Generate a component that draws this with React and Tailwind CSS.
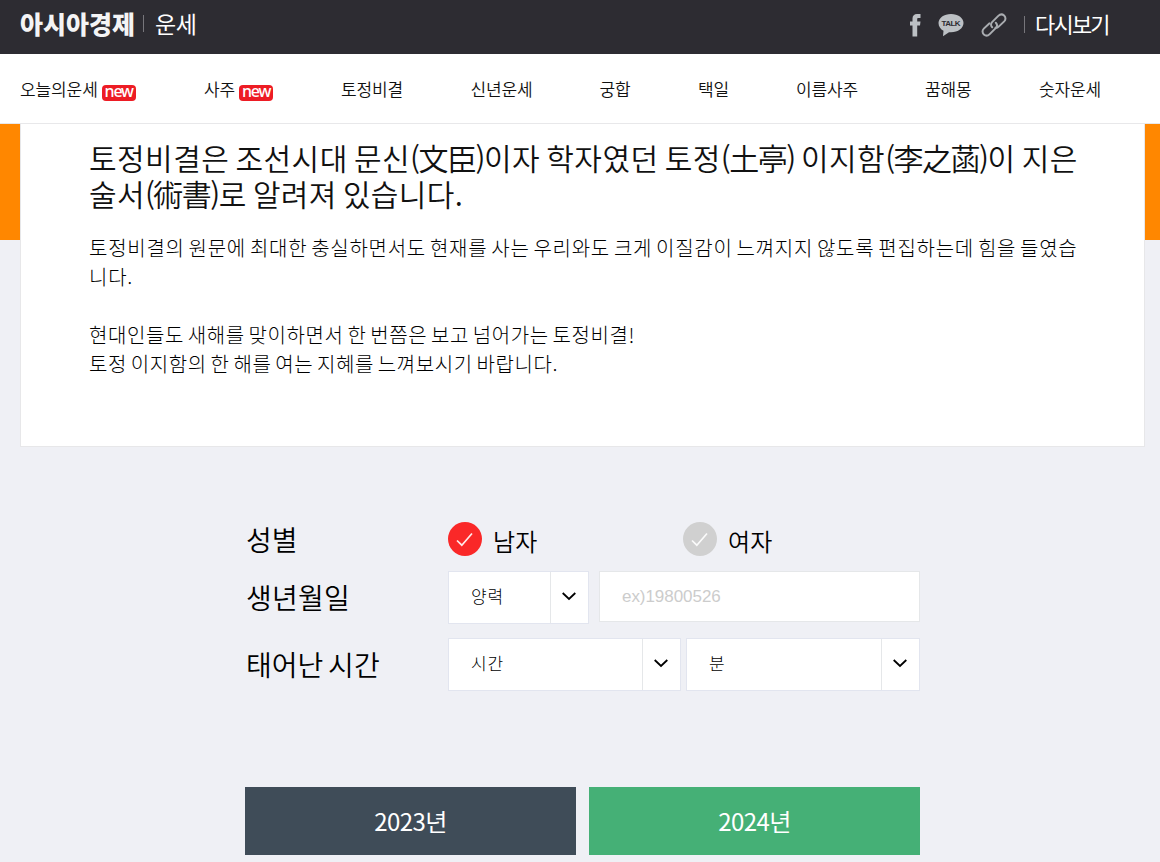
import { useState } from 'react';

const menus = [
  { name: '오늘의운세', isNew: true, width: 'w-[184px]' },
  { name: '사주', isNew: true, width: 'w-[137px]' },
  { name: '토정비결', width: 'w-[129.5px]' },
  { name: '신년운세', width: 'w-[129px]' },
  { name: '궁합', width: 'w-[98.5px]' },
  { name: '택일', width: 'w-[98px]' },
  { name: '이름사주', width: 'w-[129px]' },
  { name: '꿈해몽', width: 'w-[114px]' },
  { name: '숫자운세', width: 'w-[80px]' },
];

function FacebookIcon() {
  return (
    <svg width="11" height="24" viewBox="0 0 11 24" fill="#bcc0c4">
      <path d="M2.500 23.500V12.500H0V8.500h2.500V5.500C2.500 2.500 4.300 1 7 1h3.500v4H8.500C7.500 5 7.200 5.400 7.200 6.200V8.500h3.300l-.5 4H7.200v11z" />
    </svg>
  );
}

function TalkIcon() {
  return (
    <svg width="26" height="24" viewBox="0 0 26 24">
      <path d="M13 1C6 1 .5 4.900.5 10c0 3.400 2 6.200 5 7.800L5 23.200l6-4c.7.1 1.300.1 2 .1 7 0 12.500-4.200 12.500-9.300S20 1 13 1z" fill="#bcc0c4" />
      <text x="13" y="13.200" textAnchor="middle" textLength="19" fontFamily="Liberation Sans, sans-serif" fontWeight="700" fontSize="8" fill="#2d2c32">
        TALK
      </text>
    </svg>
  );
}

function LinkIcon() {
  return (
    <svg width="26" height="24" viewBox="0 0 26 24" fill="none" stroke="#a9acb0" strokeWidth="2" strokeLinecap="round">
      <path d="M11.200 14.200C9.600 12.600 9.700 10.500 11.300 8.900L17.300 2.900C19 1.200 21.400 1 23.100 2.500C24.900 4.200 24.900 6.700 23.200 8.400L17.700 13.600C16.800 14.500 15.700 14.900 14.500 14.800" />
      <path d="M14.800 9.800C16.400 11.400 16.300 13.500 14.700 15.100L8.700 21.100C7 22.800 4.600 23 2.900 21.500C1.100 19.800 1.100 17.300 2.800 15.600L8.300 10.400" />
    </svg>
  );
}

function Header() {
  return (
    <header className="flex h-[54px] items-start bg-[#2d2c32] pl-5 text-white">
      <h1 className="mt-[5px] w-[123px] whitespace-nowrap text-[25px] font-black leading-9 text-[#f4f4f5]">아시아경제</h1>
      <span className="mt-[15px] h-[17px] w-px bg-[#77767b]" />
      <span className="ml-[11px] mt-[5px] whitespace-nowrap text-[23px] leading-9 tracking-[-0.5px]">운세</span>
      <div className="ml-auto flex items-start">
        <span className="mt-[13px]"><FacebookIcon /></span>
        <span className="ml-[17px] mt-[13px]"><TalkIcon /></span>
        <span className="ml-[17px] mt-[13px]"><LinkIcon /></span>
        <span className="ml-[17px] mt-[16px] h-[17px] w-px bg-[#77767b]" />
        <a href="#" className="ml-[10px] mt-[5px] w-[125px] whitespace-nowrap text-[22px] leading-9 tracking-[-1.8px]">다시보기</a>
      </div>
    </header>
  );
}

function Nav() {
  return (
    <nav className="flex h-[70px] border-b border-[#e8e8ea] bg-white pl-[20px]">
      {menus.map((menu) => (
        <a key={menu.name} href="#" className={`flex shrink-0 items-start whitespace-nowrap pt-[23px] text-[17px] font-[350] leading-6 tracking-[-0.1px] text-[#111] ${menu.width}`}>
          {menu.name}
          {menu.isNew && (
            <span className="ml-[4px] mt-[8px] h-4 w-[34px] rounded bg-[#ed1c24] text-center font-['Noto_Sans'] text-[16px] font-medium leading-[12px] tracking-[-1.2px] text-white">new</span>
          )}
        </a>
      ))}
    </nav>
  );
}

function Hanja({ children }) {
  return <span className="tracking-[-1.5px]">{children}</span>;
}

function Intro() {
  return (
    <section className="flex items-start">
      <div className="h-[116px] w-5 shrink-0 bg-[#ff8700]" />
      <div className="h-[323px] flex-1 whitespace-nowrap border-x border-b border-[#e7e7e9] bg-white pl-[68px] pt-[15px] text-[#111]">
        <h2 className="text-[30px] font-[350] leading-[36px] tracking-[0.45px] [word-spacing:-2.6px]">
          <span className="block">토정비결은 조선시대 문신<Hanja>(文臣)</Hanja>이자 학자였던 토정<Hanja>(土亭)</Hanja> 이지함<Hanja>(李之菡)</Hanja>이 지은</span>
          <span className="block tracking-[0.35px]">술서<Hanja>(術書)</Hanja>로 알려져 있습니다.</span>
        </h2>
        <div className="mt-[22px] text-[20px] font-light leading-[29px] text-black [word-spacing:-2.4px]">
          <p className="tracking-[0.73px]">토정비결의 원문에 최대한 충실하면서도 현재를 사는 우리와도 크게 이질감이 느껴지지 않도록 편집하는데 힘을 들였습</p>
          <p className="tracking-[0.73px]">니다.</p>
          <p className="mt-[29px] tracking-[0.6px]">현대인들도 새해를 맞이하면서 한 번쯤은 보고 넘어가는 토정비결!</p>
          <p className="tracking-[0.6px]">토정 이지함의 한 해를 여는 지혜를 느껴보시기 바랍니다.</p>
        </div>
      </div>
      <div className="h-[116px] w-[15px] shrink-0 bg-[#ff8700]" />
    </section>
  );
}

function GenderOption({ label, checked, onClick }) {
  return (
    <button type="button" onClick={onClick} className="flex w-[235px] items-start whitespace-nowrap text-black">
      <svg width="34" height="34" viewBox="0 0 34 34" fill="none">
        <circle cx="17" cy="17" r="17" fill={checked ? '#fa2828' : '#d0d0d0'} />
        <path d="M9 18.500l4.800 4.700L24 11.500" stroke="#fff" strokeOpacity=".9" strokeWidth="1.700" />
      </svg>
      <span className="ml-[11px] mt-[1px] text-[24px] font-[350] leading-9 tracking-[0.2px]">{label}</span>
    </button>
  );
}

function SelectBox({ value, className }) {
  return (
    <button type="button" className={`flex h-[53px] items-center border border-[#e2e5ef] bg-white text-[17px] font-light text-black ${className}`}>
      <span className="flex-1 pb-[3px] pl-[22px] text-left tracking-[0.9px]">{value}</span>
      <span className="flex h-full w-[38px] items-center justify-center border-l border-[#e5e7e9] pb-[2px] pr-[1px]">
        <svg width="14" height="9" viewBox="0 0 14 9" fill="none" stroke="#000" strokeWidth="1.800">
          <path d="M.7 1l6.300 6 6.300-6" />
        </svg>
      </span>
    </button>
  );
}

function BirthForm() {
  const [gender, setGender] = useState('male');

  return (
    <form className="ml-[245px] mt-[75px] w-[675px]">
      <div className="flex h-[49px]">
        <label className="w-[203px] pl-[1px] text-[28px] font-[350] leading-[34px]">성별</label>
        <GenderOption label="남자" checked={gender === 'male'} onClick={() => setGender('male')} />
        <GenderOption label="여자" checked={gender === 'female'} onClick={() => setGender('female')} />
      </div>
      <div className="flex h-[67px]">
        <label className="w-[203px] pl-[1px] pt-[8px] text-[28px] font-[350] leading-9 tracking-[0.2px]">생년월일</label>
        <SelectBox value="양력" className="w-[141px]" />
        <input
          placeholder="ex)19800526"
          className="ml-[10px] h-[51px] w-[321px] border border-[#e5e7e9] bg-white pl-[22px] font-['Liberation_Sans'] text-[17px] tracking-[-0.05px] placeholder:text-[#ccc]"
        />
      </div>
      <div className="flex h-[53px]">
        <label className="w-[203px] whitespace-nowrap pl-[1px] pt-[8px] text-[28px] font-[350] leading-9 [word-spacing:-3px]">태어난 시간</label>
        <SelectBox value="시간" className="w-[233px]" />
        <SelectBox value="분" className="ml-[5px] w-[234px]" />
      </div>
      <div className="mt-[96px] flex gap-[13px]">
        <button type="button" className="h-[68px] flex-1 bg-[#3f4c58] text-[24px] tracking-[-0.6px] text-white">2023년</button>
        <button type="button" className="h-[68px] flex-1 bg-[#45b076] text-[24px] tracking-[-0.6px] text-white">2024년</button>
      </div>
    </form>
  );
}

export default function App() {
  return (
    <div lang="ko" className="h-[862px] w-[1160px] overflow-hidden bg-[#eff0f5] font-['Noto_Sans_CJK_KR',sans-serif]">
      <Header />
      <Nav />
      <Intro />
      <BirthForm />
    </div>
  );
}
